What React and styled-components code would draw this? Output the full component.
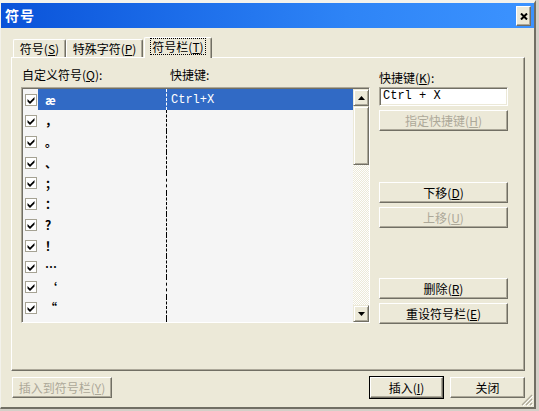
import styled, { createGlobalStyle } from "styled-components";

const GlobalStyle = createGlobalStyle`
  html, body { margin: 0; padding: 0; background: #d4d0c8; }
  body {
    font-family: "Noto Sans CJK SC", "Noto Sans", sans-serif;
    font-size: 12px;
    color: #000;
  }
  * { box-sizing: border-box; }
`;

const Window = styled.div`
  position: relative;
  width: 536px;
  height: 409px;
  background: #ece9d8;
  border-top: 3px solid #f3f2ec;
  border-left: 1px solid #f3f2ec;
  border-right: 2px solid #716f64;
  border-bottom: 2px solid #716f64;
  display: flex;
  flex-direction: column;
`;

const TitleBar = styled.div`
  height: 25px;
  display: flex;
  align-items: flex-start;
  justify-content: space-between;
  padding: 0 3px 0 4px;
  background: linear-gradient(90deg, #0a53d9 0%, #1d6eea 35%, #2e84f6 65%, #3c93ff 100%);
`;

const Title = styled.div`
  color: #fff;
  font-weight: 700;
  font-size: 14px;
  line-height: 25px;
  letter-spacing: 1px;
`;

const CloseButton = styled.div`
  width: 15px;
  height: 20px;
  margin-top: 3px;
  background: #ece9d8;
  border-top: 1px solid #fff;
  border-left: 1px solid #fff;
  border-right: 1px solid #716f64;
  border-bottom: 1px solid #716f64;
  box-shadow: inset -1px -1px #aca899;
  display: flex;
  align-items: center;
  justify-content: center;
`;

const Body = styled.div`
  flex: 1;
  display: flex;
  flex-direction: column;
  padding: 9px 9px 0 10px;
`;

const TabRow = styled.div`
  display: flex;
  align-items: flex-end;
  height: 20px;
  padding-left: 2px;
  position: relative;
  z-index: 1;
`;

const Tab = styled.div`
  width: ${(p) => p.$w}px;
  height: ${(p) => (p.$active ? 21 : 18)}px;
  margin-left: ${(p) => (p.$active ? 1 : 0)}px;
  margin-bottom: ${(p) => (p.$active ? -1 : 0)}px;
  background: #ece9d8;
  border-top: 1px solid #fff;
  border-left: 1px solid #fff;
  border-right: 1px solid #716f64;
  box-shadow: inset -1px 0 #aca899;
  border-radius: 2px 2px 0 0;
  display: flex;
  align-items: ${(p) => (p.$active ? "flex-start" : "center")};
  justify-content: center;
  padding-top: ${(p) => (p.$active ? 1 : 0)}px;
  white-space: nowrap;
  line-height: 16px;
`;

const FocusText = styled.span`
  outline: 1px dotted #000;
  padding: 0 1px;
  line-height: 15px;
`;

const Panel = styled.div`
  height: 314px;
  border-top: 1px solid #fff;
  border-left: 1px solid #fff;
  border-right: 1px solid #716f64;
  border-bottom: 1px solid #716f64;
  box-shadow: inset -1px -1px #aca899;
  padding: 9px 0 0 9px;
  display: grid;
  grid-template-columns: 349px 129px;
  column-gap: 9px;
  align-items: start;
`;

const LeftCol = styled.div`
  display: flex;
  flex-direction: column;
`;

const HeaderRow = styled.div`
  display: flex;
  height: 20px;
  line-height: 16px;
  padding-left: 1px;
`;

const HeaderCell = styled.div`
  width: ${(p) => (p.$w ? `${p.$w}px` : "auto")};
`;

const ListBox = styled.div`
  height: 236px;
  display: flex;
  border: 1px solid;
  border-color: #aca899 #fff #fff #aca899;
  box-shadow: inset 1px 1px #716f64;
  padding: 1px 0 0 1px;
  background: #f5f5f5;
`;

const Rows = styled.div`
  flex: 1;
  overflow: hidden;
  display: flex;
  flex-direction: column;
`;

const Row = styled.div`
  display: flex;
  height: ${(p) => (p.$h ? `${p.$h}px` : "auto")};
  flex: ${(p) => (p.$fill ? 1 : "0 0 auto")};
`;

const CheckCell = styled.div`
  width: 15px;
  padding-left: 2px;
  display: flex;
  align-items: center;
`;

const CheckBox = styled.div`
  width: 12px;
  height: 12px;
  background: #fff;
  border: 1px solid #a5a293;
  display: flex;
  align-items: center;
  justify-content: center;
`;

const SymbolCell = styled.div`
  width: 128px;
  padding-left: 7px;
  display: flex;
  align-items: center;
  background: ${(p) => (p.$sel ? "#316ac5" : "transparent")};
  color: ${(p) => (p.$sel ? "#fff" : "#000")};
  font-size: 12px;
  font-weight: 700;
`;

const KeyCell = styled.div`
  flex: 1;
  border-left: 1px dashed ${(p) => (p.$sel ? "#fff" : "#000")};
  padding-left: 4px;
  display: flex;
  align-items: center;
  background: ${(p) => (p.$sel ? "#316ac5" : "transparent")};
  color: ${(p) => (p.$sel ? "#fff" : "#000")};
  font-family: "Liberation Mono", "DejaVu Sans Mono", monospace;
  font-size: 12px;
`;

const ScrollBar = styled.div`
  width: 16px;
  display: flex;
  flex-direction: column;
  background-color: #fbfbf8;
  background-image: repeating-conic-gradient(#ece9d8 0% 25%, #fefefe 0% 50%);
  background-size: 2px 2px;
`;

const ScrollBtn = styled.div`
  height: ${(p) => p.$h}px;
  flex-shrink: 0;
  background: #ece9d8;
  border-top: 1px solid #ece9d8;
  border-left: 1px solid #ece9d8;
  border-right: 1px solid #716f64;
  border-bottom: 1px solid #716f64;
  box-shadow: inset 1px 1px #fff, inset -1px -1px #aca899;
  display: flex;
  align-items: center;
  justify-content: center;
`;

const Track = styled.div`
  flex: 1;
`;

const RightCol = styled.div`
  display: flex;
  flex-direction: column;
`;

const Label = styled.div`
  margin-top: 3px;
  height: 17px;
  line-height: 16px;
`;

const TextInput = styled.div`
  height: 19px;
  background: #fff;
  border: 1px solid;
  border-color: #aca899 #fff #fff #aca899;
  box-shadow: inset 1px 1px #716f64, inset -1px -1px #ece9d8;
  padding: 0 3px;
  font-family: "Liberation Mono", "DejaVu Sans Mono", monospace;
  font-size: 12px;
  line-height: 17px;
`;

const Button = styled.div`
  width: ${(p) => (p.$w ? `${p.$w}px` : "100%")};
  height: 21px;
  margin-top: ${(p) => p.$mt || 0}px;
  background: #ece9d8;
  border-top: 1px solid #fff;
  border-left: 1px solid #fff;
  border-right: 1px solid #716f64;
  border-bottom: 1px solid #716f64;
  box-shadow: inset -1px -1px #aca899;
  outline: ${(p) => (p.$default ? "1px solid #000" : "none")};
  outline-offset: 0;
  display: flex;
  align-items: center;
  justify-content: center;
  color: ${(p) => (p.$disabled ? "#aca899" : "#000")};
  white-space: nowrap;
  line-height: 16px;
  flex-shrink: 0;
`;

const BottomRow = styled.div`
  display: flex;
  align-items: center;
  margin-top: 6px;
  padding-left: 1px;
  gap: 7px;
`;

const Spacer = styled.div`
  flex: 1;
`;

const Grip = styled.svg`
  position: absolute;
  right: 1px;
  bottom: 1px;
`;

const Key = ({ k }) => (
  <>
    (<u>{k}</u>)
  </>
);

const Check = () => (
  <svg width="8" height="8" viewBox="0 0 8 8">
    <path d="M0.5 3 L3 5.5 L7.5 1 L7.5 3.5 L3 8 L0.5 5.5 Z" fill="#000" />
  </svg>
);

const Arrow = ({ down }) => (
  <svg width="7" height="4" viewBox="0 0 7 4">
    {down ? <path d="M0 0 H7 L3.5 4 Z" fill="#000" /> : <path d="M0 4 H7 L3.5 0 Z" fill="#000" />}
  </svg>
);

const symbols = ["æ", "，", "。", "、", "；", "：", "？", "！", "…", "‘", "“"];

export default function App() {
  return (
    <>
      <GlobalStyle />
      <Window>
        <TitleBar>
          <Title>符号</Title>
          <CloseButton>
            <svg width="8" height="7" viewBox="0 0 8 7">
              <path d="M1 0.5 L7 6.5 M7 0.5 L1 6.5" stroke="#000" strokeWidth="2" />
            </svg>
          </CloseButton>
        </TitleBar>
        <Body>
          <TabRow>
            <Tab $w={53}>
              符号<Key k="S" />
            </Tab>
            <Tab $w={77}>
              特殊字符<Key k="P" />
            </Tab>
            <Tab $w={68} $active>
              <FocusText>
                符号栏<Key k="T" />
              </FocusText>
            </Tab>
          </TabRow>
          <Panel>
            <LeftCol>
              <HeaderRow>
                <HeaderCell $w={148}>
                  自定义符号<Key k="Q" />:
                </HeaderCell>
                <HeaderCell>快捷键:</HeaderCell>
              </HeaderRow>
              <ListBox>
                <Rows>
                  {symbols.map((s, i) => (
                    <Row key={i} $h={i % 5 === 4 ? 20 : 21}>
                      <CheckCell>
                        <CheckBox>
                          <Check />
                        </CheckBox>
                      </CheckCell>
                      <SymbolCell $sel={i === 0}>{s}</SymbolCell>
                      <KeyCell $sel={i === 0}>{i === 0 ? "Ctrl+X" : ""}</KeyCell>
                    </Row>
                  ))}
                  <Row $fill>
                    <CheckCell />
                    <SymbolCell />
                    <KeyCell />
                  </Row>
                </Rows>
                <ScrollBar>
                  <ScrollBtn $h={17}>
                    <Arrow />
                  </ScrollBtn>
                  <ScrollBtn $h={59} />
                  <Track />
                  <ScrollBtn $h={17}>
                    <Arrow down />
                  </ScrollBtn>
                </ScrollBar>
              </ListBox>
            </LeftCol>
            <RightCol>
              <Label>
                快捷键<Key k="K" />:
              </Label>
              <TextInput>Ctrl + X</TextInput>
              <Button $mt={4} $disabled>
                指定快捷键<Key k="H" />
              </Button>
              <Button $mt={51}>
                下移<Key k="D" />
              </Button>
              <Button $mt={4} $disabled>
                上移<Key k="U" />
              </Button>
              <Button $mt={50}>
                删除<Key k="R" />
              </Button>
              <Button $mt={4}>
                重设符号栏<Key k="E" />
              </Button>
            </RightCol>
          </Panel>
          <BottomRow>
            <Button $w={100} $disabled>
              插入到符号栏<Key k="Y" />
            </Button>
            <Spacer />
            <Button $w={73} $default>
              插入<Key k="I" />
            </Button>
            <Button $w={75}>关闭</Button>
          </BottomRow>
        </Body>
        <Grip width="12" height="12" viewBox="0 0 12 12">
          <path d="M11 1 L1 11 M11 5 L5 11 M11 9 L9 11" stroke="#aca899" strokeWidth="1.2" />
          <path d="M12 2 L2 12 M12 6 L6 12 M12 10 L10 12" stroke="#fff" strokeWidth="1" />
        </Grip>
      </Window>
    </>
  );
}
